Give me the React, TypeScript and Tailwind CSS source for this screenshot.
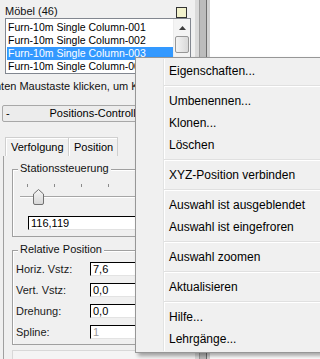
import React from "react";

const ITEMS = [
  "Furn-10m Single Column-001",
  "Furn-10m Single Column-002",
  "Furn-10m Single Column-003",
  "Furn-10m Single Column-004",
];

const MENU: (string | null)[] = [
  "Eigenschaften...",
  null,
  "Umbenennen...",
  "Klonen...",
  "Löschen",
  null,
  "XYZ-Position verbinden",
  null,
  "Auswahl ist ausgeblendet",
  "Auswahl ist eingefroren",
  null,
  "Auswahl zoomen",
  null,
  "Aktualisieren",
  null,
  "Hilfe...",
  "Lehrgänge...",
];

const ROWS = [
  { label: "Horiz. Vstz:", value: "7,6" },
  { label: "Vert. Vstz:", value: "0,0" },
  { label: "Drehung:", value: "0,0" },
  { label: "Spline:", value: "1", disabled: true },
];

function Field({ value, disabled, className }: { value: string; disabled?: boolean; className?: string }) {
  return (
    <div
      className={`h-[14px] bg-white border border-t-black border-l-black border-r-[#e3e3e3] border-b-[#e3e3e3] pl-[2px] leading-[12px] ${
        disabled ? "text-[#9a9a9a]" : "text-black"
      } ${className ?? ""}`}
    >
      {value}
    </div>
  );
}

function GroupBox({ title, className, children }: { title: string; className?: string; children: React.ReactNode }) {
  return (
    <div className={`relative border border-[#a0a0a0] shadow-[inset_1px_1px_0_#fff] ${className ?? ""}`}>
      <span className="absolute -top-[8px] left-[5px] px-[2px] bg-[#f0f0f0] leading-[13px] text-[#111]">{title}</span>
      {children}
    </div>
  );
}

function ContextMenu() {
  return (
    <div className="absolute left-[135px] top-[57px] w-[200px] h-[296px] bg-[#f0f0f0] border border-[#979797] shadow-[3px_3px_4px_rgba(0,0,0,0.35)] text-[12px] pt-[2px]">
      {/* icon gutter */}
      <div className="absolute left-[27px] top-[1px] bottom-[1px] w-px bg-[#e2e3e3]" />
      <div className="absolute left-[28px] top-[1px] bottom-[1px] w-px bg-white" />
      {MENU.map((item, i) =>
        item === null ? (
          <div key={i} className="relative h-[8px] flex flex-col justify-center pl-[28px]">
            <div className="h-px bg-[#e0e0e0]" />
            <div className="h-px bg-white" />
          </div>
        ) : (
          <div key={i} className="relative h-[22px] leading-[22px] pl-[33px] text-black whitespace-nowrap">
            {item}
          </div>
        )
      )}
    </div>
  );
}

export default function App() {
  return (
    <div className="relative w-[320px] h-[359px] overflow-hidden flex bg-white text-[11px] text-black font-['Liberation_Sans',Arial,sans-serif]">
      {/* command panel */}
      <div className="w-[195px] shrink-0 bg-[#f0f0f0] flex flex-col overflow-hidden">
        <div className="h-[22px] flex items-start justify-between pl-[5px] pr-[8px] pt-[5px]">
          <span className="leading-[13px] text-[#111]">Möbel (46)</span>
          <div className="w-[11px] h-[11px] mt-[2px] border border-[#333] bg-[#f2f2cc]" />
        </div>

        <div className="ml-[5px] w-[186px] h-[56px] border border-[#828790] bg-white flex">
          <div className="flex-1 pt-[2px] pl-[1px] overflow-hidden text-[10.5px]">
            {ITEMS.map((it, i) => (
              <div
                key={it}
                className={`h-[13px] leading-[13px] pl-[1px] whitespace-nowrap ${
                  i === 2 ? "bg-[#3399ff] text-white" : "text-black"
                }`}
              >
                {it}
              </div>
            ))}
          </div>
          <div className="w-[17px] bg-[#f4f4f4] border-l border-[#ececec] flex flex-col">
            <div className="h-[17px] flex items-center justify-center">
              <svg width="7" height="4" viewBox="0 0 7 4">
                <polygon points="0,4 3.5,0 7,4" fill="#3c3c3c" />
              </svg>
            </div>
            <div className="mx-[1px] h-[17px] rounded-[2px] border border-[#979797] bg-gradient-to-r from-[#f4f4f4] to-[#d9d9d9]" />
          </div>
        </div>

        <div className="mt-[5px] h-[15px] leading-[15px] whitespace-nowrap -ml-[57px] text-[#111]">
          Mit der rechten Maustaste klicken, um Kontextmenü zu öffnen
        </div>

        {/* rollout header */}
        <div className="mt-[11px] mx-[2px] h-[17px] border border-[#a8a8a8] rounded-[2px] bg-[#ececec] flex items-center">
          <span className="w-[12px] pl-[3px] leading-[15px]">-</span>
          <span className="flex-1 text-center leading-[15px] whitespace-nowrap">Positions-Controller</span>
          <span className="w-[12px]" />
        </div>

        {/* tabs */}
        <div className="mt-[15px] pl-[5px] flex h-[19px]">
          <div className="w-[64px] border border-b-0 border-[#cfcfcf] shadow-[inset_1px_1px_0_#fff] pl-[5px] leading-[18px]">
            Verfolgung
          </div>
          <div className="w-[49px] border border-b-0 border-l-0 border-[#cfcfcf] shadow-[inset_1px_1px_0_#fff] pl-[5px] leading-[18px]">
            Position
          </div>
        </div>

        <div className="ml-[3px] flex-1 border-l border-[#a0a0a0] flex flex-col pl-[8px] pt-[13px]">
          <GroupBox title="Stationssteuerung" className="h-[68px] w-[190px]">
            <div className="mt-[14px] ml-[14px] flex gap-[26px] h-[3px]">
              {[0, 1, 2, 3, 4].map((t) => (
                <div key={t} className="w-px h-[3px] bg-[#8a8a8a]" />
              ))}
            </div>
            <div className="relative mt-[2px] h-[16px] ml-[7px] flex">
              <div className="absolute left-0 right-0 top-[7px] h-px bg-[#a6a6a6]" />
              <div className="absolute left-0 right-0 top-[8px] h-px bg-white" />
              <svg className="relative ml-[13px] shrink-0" width="11" height="16" viewBox="0 0 11 16">
                <defs>
                  <linearGradient id="thumb" x1="0" y1="0" x2="0" y2="1">
                    <stop offset="0" stopColor="#f6f6f6" />
                    <stop offset="1" stopColor="#d6d6d6" />
                  </linearGradient>
                </defs>
                <path
                  d="M0.5 5 L5.5 0.5 L10.5 5 V14 Q10.5 15.5 9 15.5 H2 Q0.5 15.5 0.5 14 Z"
                  fill="url(#thumb)"
                  stroke="#707070"
                />
              </svg>
            </div>
            <Field value="116,119" className="mt-[11px] ml-[15px] w-[170px]" />
          </GroupBox>

          <GroupBox title="Relative Position" className="mt-[13px] h-[95px] w-[190px]">
            <div className="pt-[11px] flex flex-col gap-[7px]">
              {ROWS.map((r) => (
                <div key={r.label} className="flex items-center h-[14px]">
                  <span className="w-[77px] pl-[3px] leading-[14px] text-[#1a1a1a]">{r.label}</span>
                  <Field value={r.value} disabled={r.disabled} className="w-[100px]" />
                </div>
              ))}
            </div>
          </GroupBox>

          <div className="mt-[5px] h-[20px] w-[190px] border border-[#d8d8d8] bg-[#f4f4f4]" />
        </div>
      </div>

      {/* splitter */}
      <div className="w-[4px] bg-[#dadada]" />
      <div className="w-px bg-[#9c9c9c]" />
      <div className="w-[6px] bg-[#bcbcbc]" />
      <div className="w-px bg-[#6e6e6e]" />
      <div className="w-[3px] bg-[#d2d2d2]" />
      <div className="flex-1 bg-white" />

      <ContextMenu />
    </div>
  );
}
